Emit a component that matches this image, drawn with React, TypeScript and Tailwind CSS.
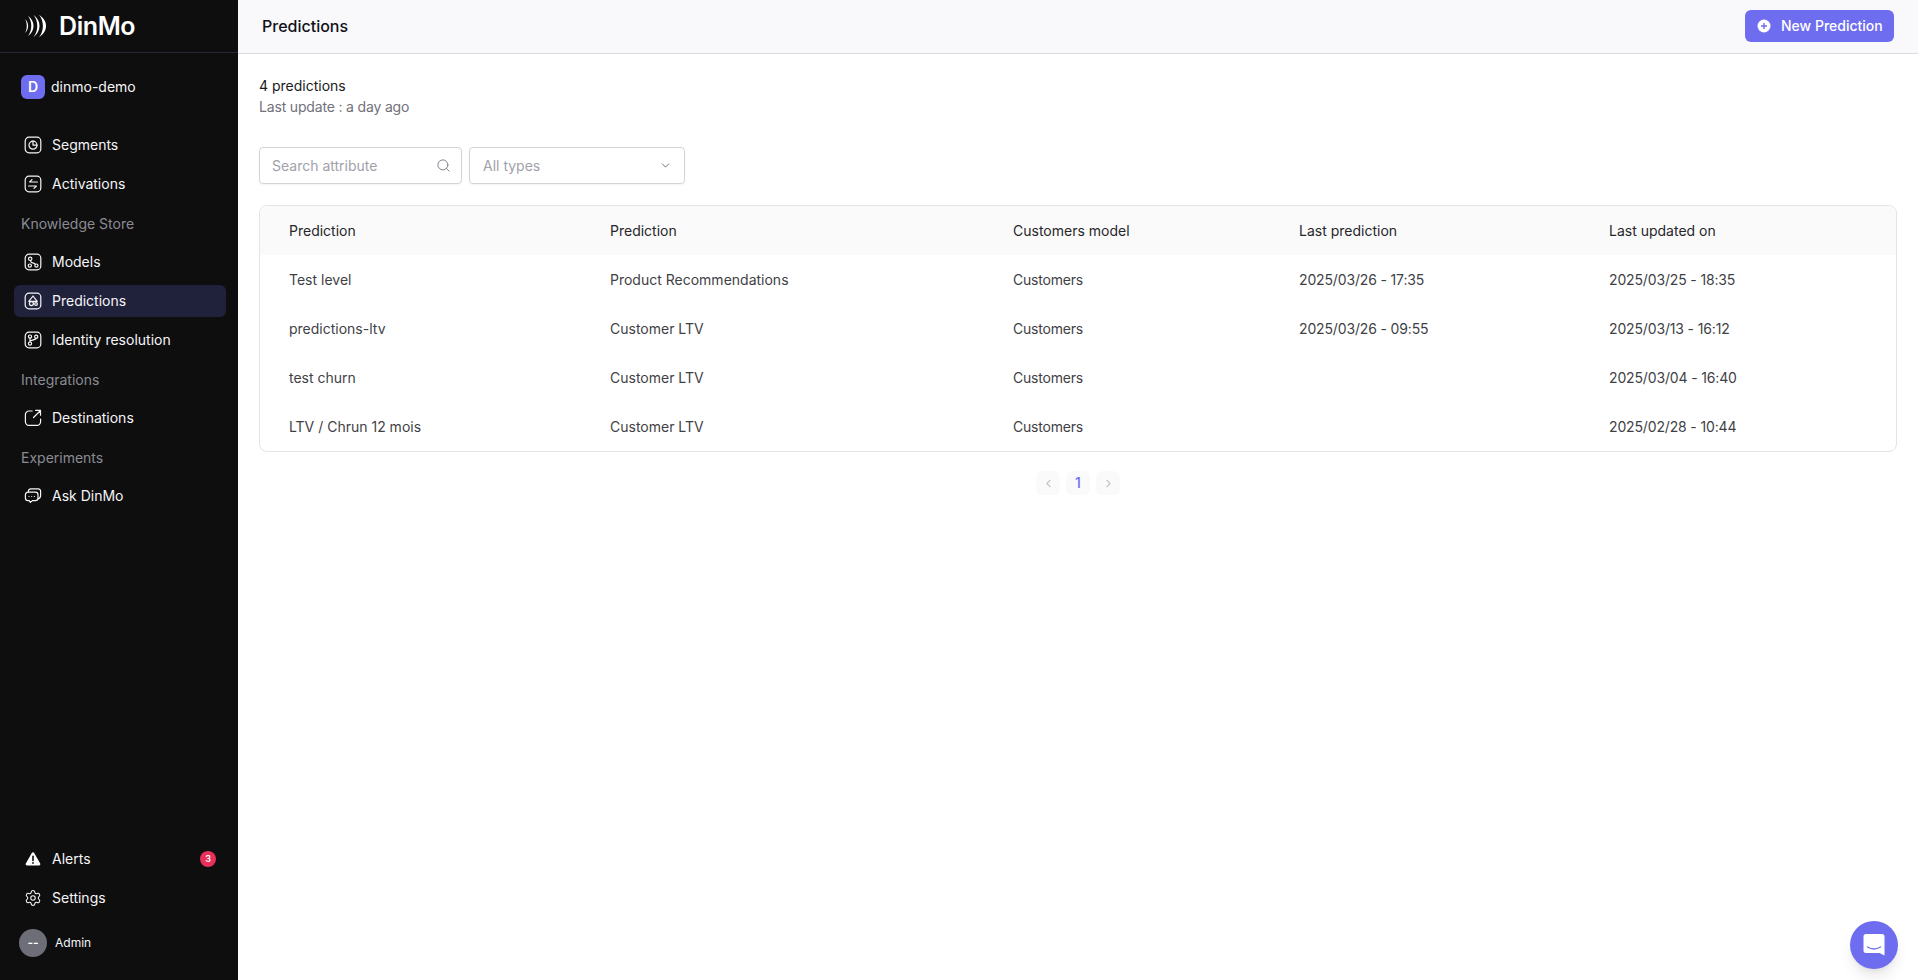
import React from "react";
import { Search, ChevronDown, ChevronLeft, ChevronRight, Settings } from "lucide-react";

const Ic = ({ children }: { children: React.ReactNode }) => (
  <svg width="18" height="18" viewBox="0 0 18 18" fill="none" stroke="currentColor" strokeWidth="1.2" strokeLinecap="round" strokeLinejoin="round" className="shrink-0">
    {children}
  </svg>
);
const Box = () => <rect x="1.2" y="1.2" width="15.6" height="15.6" rx="3.8" />;

const Segments = () => (
  <Ic><Box /><circle cx="9" cy="9.2" r="4" /><path d="M9 5.2v4h4" /></Ic>
);
const Activations = () => (
  <Ic><Box /><path d="M13.4 7H5.6L8 4.6M4.6 11h7.8L10 13.4" /></Ic>
);
const Models = () => (
  <Ic><Box /><circle cx="6.2" cy="5.8" r="1.7" /><circle cx="5.8" cy="12.6" r="1.6" /><circle cx="12.4" cy="12.6" r="1.6" /><path d="M6.6 7.5 7 9c.4 1 3.4.6 4.4 2.2" /></Ic>
);
const Predictions = () => (
  <Ic><Box /><path d="M9 4 4.8 9.4h8.4L9 4Z" /><circle cx="7.4" cy="11.6" r="2" /><circle cx="12" cy="12" r="1.4" /></Ic>
);
const Identity = () => (
  <Ic><Box /><circle cx="6" cy="5.6" r="1.6" /><circle cx="6" cy="12.6" r="1.6" /><circle cx="12.2" cy="5.8" r="1.6" /><path d="M6 7.2V11M6 10.4c.3-1.6 5-.8 6.2-3" /></Ic>
);
const Destinations = () => (
  <Ic><path d="M8.2 2H5a3.6 3.6 0 0 0-3.6 3.6v7.2A3.6 3.6 0 0 0 5 16.4h8a3.6 3.6 0 0 0 3.6-3.6V10" /><path d="M9.5 8.5 16 2M11.6 1.4h4.9v4.8" /></Ic>
);
const Ask = () => (
  <Ic><path d="M4.4 5V4.2a2.4 2.4 0 0 1 2.4-2.4h7.4a2.4 2.4 0 0 1 2.4 2.4v4.4a3.6 3.6 0 0 1-2.5 3.4" /><path d="M4 5.2h7.4a2.6 2.6 0 0 1 2.6 2.6v3.2a2.6 2.6 0 0 1-2.6 2.6H8.4l-2 1.8-1.2-1.8H4a2.6 2.6 0 0 1-2.6-2.6V7.8A2.6 2.6 0 0 1 4 5.2Z" /><path d="M5 9.5h.01M7.7 9.5h.01M10.4 9.5h.01" /></Ic>
);
const Alert = () => (
  <svg width="18" height="18" viewBox="0 0 18 18" className="shrink-0">
    <path d="M9 2.2c.5 0 .9.3 1.2.7l6 10.6c.5.9-.1 2-1.2 2H3c-1.1 0-1.7-1.1-1.2-2l6-10.6c.3-.4.7-.7 1.2-.7Z" fill="#fff" />
    <path d="M9 6.4v4" stroke="#0e0e0f" strokeWidth="1.6" strokeLinecap="round" />
    <circle cx="9" cy="12.9" r="0.95" fill="#0e0e0f" />
  </svg>
);

const NavItem = ({ icon, label, active, badge }: { icon: React.ReactNode; label: string; active?: boolean; badge?: string }) => (
  <div className={`h-8 ml-[14px] mr-[12px] rounded-md flex items-center pl-[10px] gap-[10px] text-sm ${active ? "bg-[#20213a]" : ""} text-[#f5f5f7]`}>
    {icon}
    <span className="flex-1">{label}</span>
    {badge && (
      <span className="w-4 h-4 mr-[10px] rounded-full bg-[#e8305a] text-white text-[9px] font-semibold flex items-center justify-center">{badge}</span>
    )}
  </div>
);

const Section = ({ label }: { label: string }) => (
  <div className="h-[16px] mt-[9px] mb-[7px] mx-[21px] flex items-center text-sm text-[#8b8b93]">{label}</div>
);

const columns = "grid grid-cols-[321px_403px_286px_310px_1fr] items-center pl-[29px]";
const rows = [
  ["Test level", "Product Recommendations", "Customers", "2025/03/26 - 17:35", "2025/03/25 - 18:35"],
  ["predictions-ltv", "Customer LTV", "Customers", "2025/03/26 - 09:55", "2025/03/13 - 16:12"],
  ["test churn", "Customer LTV", "Customers", "", "2025/03/04 - 16:40"],
  ["LTV / Chrun 12 mois", "Customer LTV", "Customers", "", "2025/02/28 - 10:44"],
];
const cellTracking = ["", "", "tracking-[-0.2px]", "tracking-[-0.15px]", "tracking-[-0.15px]"];

export default function App() {
  return (
    <div className="flex h-[980px] w-[1918px] overflow-hidden bg-white text-sm font-['Inter',sans-serif]">
      <aside className="w-[238px] shrink-0 bg-[#0e0e0f] flex flex-col">
        <div className="h-[53px] border-b border-[#23253a] flex items-center pl-[25px] gap-[12px]">
          <svg width="22" height="24" viewBox="0 0 22 24" fill="#fff">
            <path d="M0 5C2.4 9 2.4 15 0 19 4.2 15.5 4.2 8.5 0 5Z" />
            <path d="M3 2C7.4 7.5 7.4 16.5 3 22 10.4 17 10.4 7 3 2Z" />
            <path d="M8.4 .8C13.6 7 13.6 17 8.4 23.2 16.6 17.4 16.6 6.6 8.4 .8Z" />
            <path d="M14 .8C19.2 7 19.2 17 14 23.2 23.4 17.4 23.4 6.6 14 .8Z" />
          </svg>
          <span className="text-[25px] leading-none font-semibold text-white tracking-[-0.4px]">DinMo</span>
        </div>
        <div className="h-[68px] flex items-center pl-[21px] gap-[6px] mb-[7px]">
          <div className="w-6 h-6 rounded-md bg-[#6e6df0] text-white text-sm font-semibold flex items-center justify-center">D</div>
          <span className="text-sm text-[#f5f5f7]">dinmo-demo</span>
        </div>
        <div className="flex flex-col gap-[7px] pt-[1px]">
          <NavItem icon={<Segments />} label="Segments" />
          <NavItem icon={<Activations />} label="Activations" />
          <Section label="Knowledge Store" />
          <NavItem icon={<Models />} label="Models" />
          <NavItem icon={<Predictions />} label="Predictions" active />
          <NavItem icon={<Identity />} label="Identity resolution" />
          <Section label="Integrations" />
          <NavItem icon={<Destinations />} label="Destinations" />
          <Section label="Experiments" />
          <NavItem icon={<Ask />} label="Ask DinMo" />
        </div>
        <div className="mt-auto flex flex-col gap-[7px] pb-[23px]">
          <NavItem icon={<Alert />} label="Alerts" badge="3" />
          <NavItem icon={<Settings size={18} strokeWidth={1.4} className="shrink-0" />} label="Settings" />
          <div className="flex items-center pl-[19px] gap-[8px] mt-[8px] h-7">
            <div className="w-7 h-7 rounded-full bg-[#6e6e78] text-white text-xs font-semibold flex items-center justify-center">--</div>
            <span className="text-xs text-[#f5f5f7]">Admin</span>
          </div>
        </div>
      </aside>

      <main className="flex-1 flex flex-col min-w-0 relative">
        <header className="h-[54px] shrink-0 bg-[#f9f9fc] border-b border-[#dcdce0] flex items-center justify-between pl-[24px] pr-[24px] pb-[2px]">
          <h1 className="text-base font-medium text-[#111118]">Predictions</h1>
          <button className="h-8 w-[149px] rounded-md bg-[#6e6df0] text-white text-sm font-medium flex items-center pl-[12px] gap-[10px]">
            <svg width="14" height="14" viewBox="0 0 14 14"><circle cx="7" cy="7" r="6.5" fill="#fff" /><path d="M7 4v6M4 7h6" stroke="#6e6df0" strokeWidth="1.4" /></svg>
            New Prediction
          </button>
        </header>

        <div className="flex-1 pl-[21px] pr-[21px] pt-[22px]">
          <div className="leading-[20px] text-[#1a1a22] h-5">4 predictions</div>
          <div className="leading-[20px] text-[#71717a] mt-[1px] h-5 tracking-[-0.17px]">Last update : a day ago</div>

          <div className="flex gap-[7px] mt-[30px]">
            <div className="w-[203px] h-[37px] border border-[#d4d4d8] rounded-[4px] shadow-xs flex items-center justify-between pl-[12px] pr-[10px]">
              <span className="text-[#a1a1aa]">Search attribute</span>
              <Search size={15} strokeWidth={1.4} className="text-[#71717a]" />
            </div>
            <div className="w-[216px] h-[37px] border border-[#d4d4d8] rounded-[4px] shadow-xs flex items-center justify-between pl-[13px] pr-[12px]">
              <span className="text-[#a1a1aa]">All types</span>
              <ChevronDown size={13} strokeWidth={1.5} className="text-[#52525b]" />
            </div>
          </div>

          <div className="mt-[21px] border border-[#e4e4e7] rounded-lg overflow-hidden">
            <div className={`${columns} h-[49px] bg-[#fafafa] text-[#27272a]`}>
              <span>Prediction</span>
              <span>Prediction</span>
              <span>Customers model</span>
              <span>Last prediction</span>
              <span>Last updated on</span>
            </div>
            {rows.map((r) => (
              <div key={r[0]} className={`${columns} h-[49px] text-[#3f3f46]`}>
                {r.map((c, i) => (
                  <span key={i} className={cellTracking[i]}>{c}</span>
                ))}
              </div>
            ))}
          </div>

          <div className="flex justify-center gap-[6px] mt-[19px]">
            <div className="w-6 h-6 rounded-md bg-[#fafafa] flex items-center justify-center text-[#c4c4c8]"><ChevronLeft size={13} /></div>
            <div className="w-6 h-6 rounded-md bg-[#fafafa] flex items-center justify-center text-[#6e6df0] text-sm font-medium">1</div>
            <div className="w-6 h-6 rounded-md bg-[#fafafa] flex items-center justify-center text-[#c4c4c8]"><ChevronRight size={13} /></div>
          </div>
        </div>

        <div className="absolute right-[20px] bottom-[11px] w-12 h-12 rounded-full bg-[#6e6df0] shadow-lg flex items-center justify-center">
          <svg width="22" height="24" viewBox="0 0 22 24">
            <path d="M3 1h16a2.5 2.5 0 0 1 2.5 2.5V22.5L16.5 20H3A2.5 2.5 0 0 1 .5 17.5v-14A2.5 2.5 0 0 1 3 1Z" fill="#fff" />
            <path d="M4.5 14c4 2.4 9 2.4 13 0" stroke="#6e6df0" strokeWidth="1.4" fill="none" strokeLinecap="round" />
          </svg>
        </div>
      </main>
    </div>
  );
}
